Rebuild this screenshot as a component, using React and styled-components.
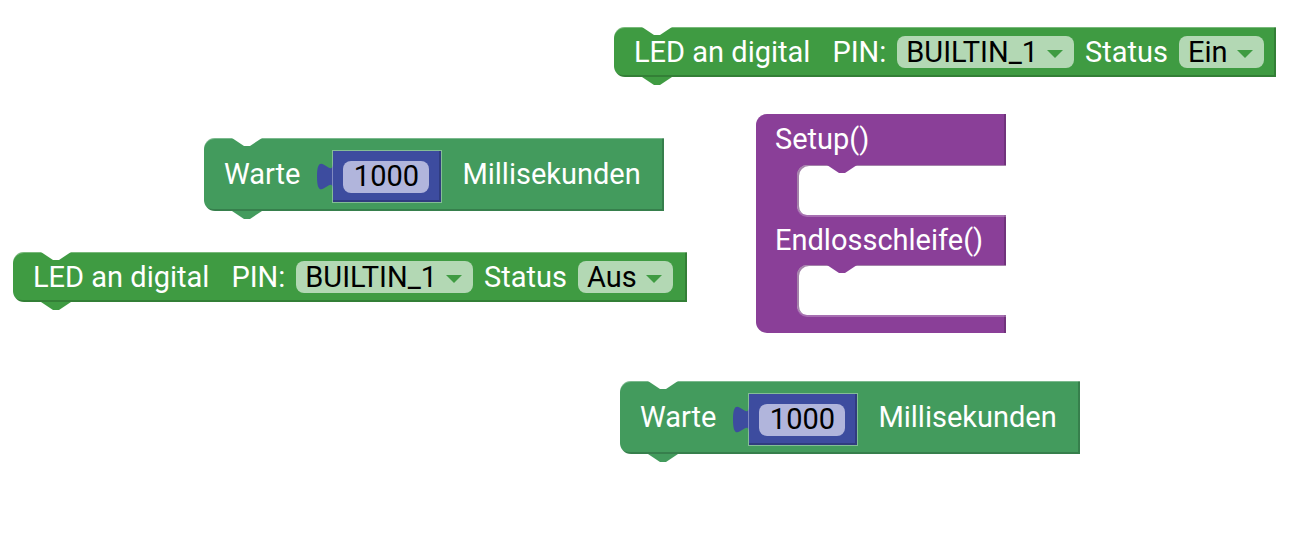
import React from "react";
import styled, { createGlobalStyle } from "styled-components";

const GREEN = "#3f9b42";
const WAIT_GREEN = "#439b5d";
const PURPLE = "#8a3f98";
const BLUE = "#3d4c9f";

const Global = createGlobalStyle`
  html, body {
    margin: 0;
    padding: 0;
    background: #ffffff;
  }
  body {
    font-family: Roboto, "Noto Sans", "Liberation Sans", sans-serif;
  }
`;

const Workspace = styled.div`
  position: relative;
  width: 1298px;
  height: 543px;
  overflow: hidden;
  background: #ffffff;
`;

const StatementBlock = styled.div`
  position: absolute;
  left: ${(p) => p.$x}px;
  top: ${(p) => p.$y}px;
  height: ${(p) => p.$h}px;
  box-sizing: border-box;
  display: flex;
  align-items: center;
  gap: 11px;
  padding: 0 ${(p) => p.$padRight || 12}px 0 20px;
  background: ${(p) => p.$color};
  border-radius: 11px 0 0 11px;
  box-shadow: inset 0 1px 0 rgba(255, 255, 255, 0.3),
    inset -2px -2px 0 rgba(0, 0, 0, 0.18);

  &::before {
    content: "";
    position: absolute;
    top: 0;
    left: 28px;
    width: 30px;
    height: 8px;
    background: #ffffff;
    clip-path: polygon(0 0, 100% 0, 60% 100%, 40% 100%);
  }

  &::after {
    content: "";
    position: absolute;
    bottom: -8px;
    left: 28px;
    width: 30px;
    height: 8px;
    background: ${(p) => p.$color};
    clip-path: polygon(0 0, 100% 0, 60% 100%, 40% 100%);
  }
`;

const Label = styled.span`
  color: #ffffff;
  font-size: 29px;
  line-height: 1;
  white-space: pre;
  margin-right: ${(p) => (p.$wide ? 11 : 0)}px;
`;

const Dropdown = styled.div`
  display: flex;
  align-items: center;
  gap: 9px;
  height: 32px;
  padding: 0 11px 0 9px;
  border-radius: 8px;
  background: #b3d8b4;
  color: #000000;
  font-size: 29px;
  line-height: 1;
`;

const Arrow = styled.span`
  width: 0;
  height: 0;
  margin-top: 3px;
  border-left: 8px solid transparent;
  border-right: 8px solid transparent;
  border-top: 8px solid ${(p) => p.$color};
`;

const ValueInput = styled.div`
  display: flex;
  align-items: flex-start;
  margin: 4px 10px 0 6px;
`;

const PuzzleTab = styled.svg`
  width: 16px;
  height: 29px;
  margin-top: 11px;
  overflow: visible;
  display: block;
`;

const ValueBlock = styled.div`
  display: flex;
  align-items: center;
  height: 51px;
  box-sizing: border-box;
  padding: 0 12px 0 10px;
  background: ${BLUE};
  box-shadow: 0 0 0 1px rgba(255, 255, 255, 0.35),
    inset -2px -2px 0 rgba(0, 0, 0, 0.2);
`;

const NumberField = styled.div`
  display: flex;
  align-items: center;
  justify-content: center;
  width: 86px;
  height: 32px;
  border-radius: 8px;
  background: #b1b5dc;
  color: #000000;
  font-size: 29px;
  line-height: 1;
`;

const HatBlock = styled.div`
  position: absolute;
  left: ${(p) => p.$x}px;
  top: ${(p) => p.$y}px;
  width: 250px;
  display: flex;
  flex-direction: column;
`;

const Bar = styled.div`
  display: flex;
  align-items: center;
  height: ${(p) => p.$h}px;
  padding-left: 19px;
  background: ${PURPLE};
  border-radius: ${(p) => p.$radius || "0"};
  box-shadow: inset -2px 0 0 rgba(0, 0, 0, 0.18);
`;

const Slot = styled.div`
  display: flex;
  height: 50px;
  background: ${PURPLE};
`;

const Arm = styled.div`
  width: 41px;
  background: ${PURPLE};
`;

const Mouth = styled.div`
  position: relative;
  flex: 1;
  background: #ffffff;
  border-radius: 10px 0 0 10px;
  box-shadow: inset 2px 1px 0 rgba(90, 30, 100, 0.55),
    0 2px 0 rgba(255, 255, 255, 0.25);

  &::before {
    content: "";
    position: absolute;
    top: 0;
    left: 30px;
    width: 30px;
    height: 8px;
    background: ${PURPLE};
    clip-path: polygon(0 0, 100% 0, 60% 100%, 40% 100%);
  }
`;

const Tab = () => (
  <PuzzleTab viewBox="0 0 8 15" preserveAspectRatio="none">
    <path d="M8,0 C8,10 0,-8 0,7.5 C0,23 8,5 8,15 Z" fill={BLUE} />
  </PuzzleTab>
);

const LedBlock = ({ x, y, state, padRight }) => (
  <StatementBlock $x={x} $y={y} $h={50} $color={GREEN} $padRight={padRight}>
    <Label $wide>LED an digital</Label>
    <Label>PIN:</Label>
    <Dropdown>
      BUILTIN_1
      <Arrow $color={GREEN} />
    </Dropdown>
    <Label>Status</Label>
    <Dropdown>
      {state}
      <Arrow $color={GREEN} />
    </Dropdown>
  </StatementBlock>
);

const WaitBlock = ({ x, y, ms }) => (
  <StatementBlock $x={x} $y={y} $h={73} $color={WAIT_GREEN} $padRight={23}>
    <Label>Warte</Label>
    <ValueInput>
      <Tab />
      <ValueBlock>
        <NumberField>{ms}</NumberField>
      </ValueBlock>
    </ValueInput>
    <Label>Millisekunden</Label>
  </StatementBlock>
);

const MainBlock = ({ x, y }) => (
  <HatBlock $x={x} $y={y}>
    <Bar $h={51} $radius="11px 0 0 0">
      <Label>Setup()</Label>
    </Bar>
    <Slot>
      <Arm />
      <Mouth />
    </Slot>
    <Bar $h={50}>
      <Label>Endlosschleife()</Label>
    </Bar>
    <Slot>
      <Arm />
      <Mouth />
    </Slot>
    <Bar $h={18} $radius="0 0 0 11px" />
  </HatBlock>
);

export default function App() {
  return (
    <>
      <Global />
      <Workspace>
        <LedBlock x={614} y={27} state="Ein" />
        <WaitBlock x={204} y={138} ms="1000" />
        <LedBlock x={13} y={252} state="Aus" padRight={14} />
        <MainBlock x={756} y={114} />
        <WaitBlock x={620} y={381} ms="1000" />
      </Workspace>
    </>
  );
}
